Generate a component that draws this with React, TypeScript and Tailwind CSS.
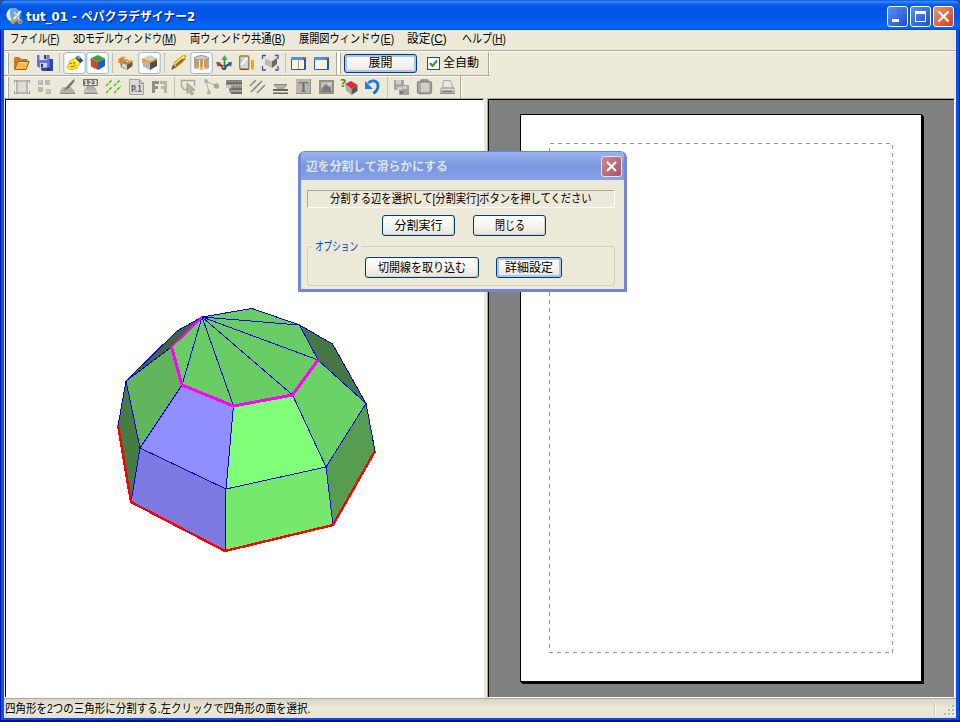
import { useLayoutEffect, useRef } from 'react';
import type { ReactNode } from 'react';

// Single-line text squeezed or stretched horizontally to an exact width.
function Fit({ w, children, className = '' }: { w: number; children: ReactNode; className?: string }) {
  const ref = useRef<HTMLSpanElement>(null);
  useLayoutEffect(() => {
    const el = ref.current;
    if (el && el.offsetWidth) el.style.transform = `scaleX(${w / el.offsetWidth})`;
  }, [w]);
  return (
    <span className={`flex shrink-0 whitespace-nowrap ${className}`} style={{ width: w }}>
      <span ref={ref} className="block shrink-0 origin-left">{children}</span>
    </span>
  );
}

function Tool({ on = false, children }: { on?: boolean; children: ReactNode }) {
  return (
    <div className="h-[22px] w-[23px] shrink-0">
      <svg width="23" height="22" viewBox="0 0 23 22" fill="none">
        {on && <rect x="0.8" y="0.5" width="21.4" height="21" rx="2.5" fill="#fff" stroke="#98b5cf" />}
        {children}
      </svg>
    </div>
  );
}

const Sep = ({ wide = false }: { wide?: boolean }) => (
  <div className={`flex h-[20px] shrink-0 justify-center ${wide ? 'w-[7px]' : 'w-[6px]'}`}>
    <div className="w-px bg-[#c5c2b2]" />
  </div>
);

const Grip = () => <div className="mr-px h-[21px] w-[3px] shrink-0 border-r border-[#aca899] bg-white" />;
const End = () => <div className="ml-[2px] h-[23px] w-[2px] shrink-0 border-l border-[#aca899] bg-white" />;

const Cube = ({ top, left, right }: { top: string; left: string; right: string }) => (
  <>
    <path d="M4.5 6.5 12 3 19 6.5 12 10Z" fill={top} />
    <path d="M4.5 6.5 12 10V18L5 14.5Z" fill={left} />
    <path d="M12 10 19 6.5V14L12 18Z" fill={right} />
  </>
);

const WindowIcon = ({ split = false }: { split?: boolean }) => (
  <>
    <rect x="4" y="5" width="15" height="13" rx="1" fill="#2458b8" />
    <rect x="4" y="5" width="12" height="3" fill="#4a94ea" />
    <rect x="15" y="5" width="3" height="2" fill="#e8552b" />
    <rect x="5" y="8" width="12" height="9" fill="#fcf5dc" />
    {split && <path d="M11.5 8v9" stroke="#a59e8c" />}
  </>
);

function TopTools() {
  return (
    <>
      <Tool>
        <path d="M4 6.5 5 5h4l2 2h6.5v2.5H8L4 18Z" fill="#c77a1e" />
        <path d="M4.5 17.5 8 9.5h11.2l-3.2 8Z" fill="#f6b84d" stroke="#a55c11" />
        <path d="M8.5 10.5h9" stroke="#ffe09a" />
      </Tool>
      <Tool>
        <path d="M8 7h12v12H9.5L8 17.5Z" fill="#3444b4" />
        <path d="M4 3h12.5v12.5H5.5L4 14Z" fill="#6276da" />
        <path d="M6.5 3h7v5h-7Z" fill="#dfe2f8" /><path d="M7 11h7v4.5H7Z" fill="#cfd4e5" />
        <path d="M11 3h2v4h-2ZM8 12h2v3H8ZM14 16h3v3h-3Z" fill="#2b3579" />
      </Tool>
      <Sep wide />
      <Tool on>
        <path d="m12 6 3-2.5 5.5 5-3.5 3Z" fill="#304c78" /><path d="m14 5 2-1.5 2 2-2.5 2Z" fill="#88a7cc" />
        <path d="m4 15.5 3-6.5 5-3 5 5-3.5 5.5-7 1.5Z" fill="#ffe51e" stroke="#d9a800" strokeWidth=".8" />
        <circle cx="8" cy="11.5" r=".8" fill="#665800" /><circle cx="11" cy="11" r=".8" fill="#665800" />
        <path d="M7.5 14.5q3 1 5-1.5" stroke="#8c7600" /><path d="m12 7.5 3.5 3.5" stroke="#fff8a0" strokeWidth="1.5" />
      </Tool>
      <Tool on><Cube top="#39a43c" left="#d7462c" right="#245fb2" /></Tool>
      <Sep />
      <Tool>
        <path d="m4 8 5-3 8 2v5l-6 6-5-3Z" fill="#8e8c86" /><path d="m8 7 3-2 7 2.5-5 3Z" fill="#f2f0ea" />
        <path d="m7 11 5 2v5l-5-3.5Z" fill="#dcd9d0" /><path d="m12 13 5.5-3.5V14L12 18Z" fill="#595854" />
        <path d="M9 5 4 7.5V10l3 1.5V9l4-1.5 2.5 1V11l4-2" stroke="#f08b18" strokeWidth="1.5" />
      </Tool>
      <Tool on>
        <Cube top="#cfcdc9" left="#b9b7b1" right="#4e4d4a" />
        <path d="m4.5 7 7.5 3.5L19 7" stroke="#f09425" strokeWidth="1.5" /><path d="M4.7 7v4" stroke="#f09425" />
      </Tool>
      <Sep />
      <Tool>
        <path d="m5 16 2-6 9-7h3v3l-4 5-7 5Z" fill="#e5a71c" /><path d="m7 12 9-8 2 1-8 8Z" fill="#fff04a" />
        <path d="m4 18 2-5 3 2.5Z" fill="#565a62" /><path d="m9 13 7-6" stroke="#55513c" strokeWidth="1.3" />
        <path d="m8 16 10-9" stroke="#a5571d" />
      </Tool>
      <Tool on>
        <path d="M4 6q7-5 15 0v10q-2 2-3-1H7q-1 3-3 1Z" fill="#a5a6a9" />
        <path d="M4 6q7-5 15 0l-2 2H6Z" fill="#c8cbd0" stroke="#777a80" strokeWidth=".7" />
        <path d="M7.5 7v10M11.5 7v11M15.5 7v10" stroke="#f29127" strokeWidth="2" />
        <path d="M9.5 8v8M13.5 8v8" stroke="#fff" />
      </Tool>
      <Tool>
        <path d="M11.5 14V6" stroke="#278545" strokeWidth="1.6" /><path d="m11.5 3 3 5h-6Z" fill="#41a958" />
        <path d="m11 15-6-3" stroke="#963331" strokeWidth="2.4" /><path d="m3 10 5 .5-3 4.5Z" fill="#b9362d" />
        <path d="m11 15 6-3" stroke="#245a8b" strokeWidth="2.4" /><path d="m19 10-4.5.5L18 15Z" fill="#285b91" />
        <circle cx="11" cy="15.5" r="2.6" fill="#405a5e" /><circle cx="10.5" cy="14.7" r="1" fill="#b7c7c1" />
      </Tool>
      <Tool>
        <rect x="3.7" y="4" width="9" height="13" rx="1" fill="#b7dcf0" stroke="#b77730" strokeWidth="1.4" />
        <path d="m5 13 6-7" stroke="#fff" strokeWidth="2" /><path d="M4 17.5h9" stroke="#835022" />
        <path d="M15 8h3v9.5h-3Z" fill="#f5a21d" />
      </Tool>
      <Tool>
        <path d="M3.5 7V3.5H7M16 3.5h3V7M3.5 14v4H7M16 18h3v-4" stroke="#3552c5" strokeWidth="1.3" />
        <path d="m6 6.5 6-3 6 2.5-5 3.5Z" fill="#e4e4e4" /><path d="m6 6.5 7 3V16l-7-3.5Z" fill="#b9b9b9" /><path d="M13 9.5 18 6v6l-5 4Z" fill="#666" />
      </Tool>
      <Sep />
      <div className="-ml-px flex">
        <Tool><WindowIcon split /></Tool>
        <Tool><WindowIcon /></Tool>
      </div>
      <div className="w-px" />
    </>
  );
}

function BottomTools() {
  return (
    <>
      <Tool>
        <path d="M7 5h10v12H7Z" fill="#dddcd7" stroke="#aaa99f" strokeWidth="1.5" />
        <path d="M4.5 7V4.5H7M17 4.5h2.500V7M4.500 15v2.500H7M17 17.500h2.500V15" stroke="#9a9991" />
      </Tool>
      <Tool><path d="M5 4h5v5H5ZM12 4h5v5h-5ZM5 11h5v5H5ZM13 13h5v5h-5Z" fill="#bbb9b0" /><path d="M6 4h2v2H6ZM14 14h2v2h-2Z" fill="#d0cec5" /></Tool>
      <Tool>
        <path d="m4 15 3-4h8l4 5v2H4Z" fill="#b2b1aa" /><path d="m8 14 4-5 5-5 2-1-1 3-5 6-4 2Z" fill="#74736d" />
        <path d="M4 17.500h15" stroke="#8d8c86" />
      </Tool>
      <Tool>
        <path d="m5 15 3-5h7l3 5v3H5Z" fill="#aeada7" />
        <rect x="4" y="3" width="15" height="7" rx="1" fill="#73726d" />
        <text x="11.5" y="9" textAnchor="middle" fontFamily="DejaVu Sans, sans-serif" fontWeight="700" fontSize="6.5" fill="#fff">123</text>
        <path d="M6 15h12" stroke="#d6d5ce" /><path d="M5 17.500h14" stroke="#8d8c86" />
      </Tool>
      <Tool><path d="m4 10 6-6M4 17 10 11M12 10l6-6M12 17l7-7" stroke="#65c52b" strokeWidth="1.7" strokeDasharray="3.500 1" /></Tool>
      <Tool>
        <path d="M4.500 3.500h10l4 4v11h-14Z" fill="#dcdbd5" stroke="#a3a29c" /><path d="M14.500 3.500v4h4" stroke="#8d8c86" />
        <text x="11.500" y="16" textAnchor="middle" fontFamily="DejaVu Sans, sans-serif" fontWeight="700" fontSize="8.500" textLength="11" lengthAdjust="spacingAndGlyphs" fill="#686761">P.1</text>
      </Tool>
      <Tool>
        <path d="M4 5h7v3H7v2h3v3H7v4H4Z" fill="#908f89" /><path d="M12 5h7v12h-3v-4h-3v-3h3V8h-4Z" fill="#b8b7af" />
      </Tool>
      <Sep />
      <Tool>
        <path d="M10 13.500H7L4.500 10V4.500h13V10" stroke="#a9a8a2" strokeWidth="1.400" />
        <path d="m10 7 8 7-4 .5 2.500 3.500-2 1-2.500-3.500-2 2Z" fill="#b7b6af" stroke="#8f8e88" strokeWidth=".8" />
      </Tool>
      <Tool>
        <path d="m6 5 3 11M6 5l10 5" stroke="#adaca5" />
        <circle cx="6" cy="5" r="2" fill="#b2b1aa" /><circle cx="16.500" cy="10" r="2.700" fill="#a8a7a0" /><circle cx="9" cy="16.500" r="2" fill="#b4b3ac" />
      </Tool>
      <Tool>
        <path d="M3 4h16v14H8l-2-3V9H3Z" fill="#92918b" />
        <path d="M4 4.500h14" stroke="#73726d" strokeDasharray="2 1" />
        <path d="M3 7h16M8 13h11M8 17h11" stroke="#63625d" strokeWidth="1.500" />
        <path d="M8 9.500h10M8 15h10" stroke="#bcbbb4" strokeDasharray="2 1" /><path d="M3 9h5v3H3Z" fill="#c9c8c0" />
      </Tool>
      <Tool><path d="m4 10 6-6M5 16 16 5M11 17l8-8" stroke="#8d8c84" strokeWidth="1.700" /></Tool>
      <Tool>
        <path d="M5 8h13v2q-3 2-3 4H8q0-2-3-4Z" fill="#aeada6" /><path d="M5 8.500h13" stroke="#85847e" />
        <path d="M4 13h15v2H4ZM4 16.500h15v1.500H4Z" fill="#66655f" />
      </Tool>
      <Tool>
        <path d="M4 3h15v15H4Z" fill="#b7b6af" /><path d="M4 17.500h15M18.500 3v15" stroke="#92918b" />
        <text x="11.500" y="15.500" textAnchor="middle" fontFamily="Liberation Serif, serif" fontWeight="700" fontSize="14" fill="#75746f">T</text>
      </Tool>
      <Tool>
        <path d="M4 4h15v14H4Z" fill="#92918b" /><path d="M6 6h11v10H6Z" fill="#c0bfb8" /><path d="m6 16 1-4 4-4 3 3 1-1 2 6Z" fill="#7d7c77" /><circle cx="14.500" cy="8" r="1.200" fill="#deddd6" />
      </Tool>
      <Tool>
        <path d="m7 8 6-3 6.500 4-6 4Z" fill="#dc2b35" /><path d="m7 8 6.500 5v6L8 14.500Z" fill="#aaa" /><path d="m13.500 13 6-4v6l-6 4Z" fill="#56575d" />
        <text x="2" y="10.500" fontFamily="DejaVu Sans, sans-serif" fontWeight="700" fontSize="11" fill="#468c15">?</text>
      </Tool>
      <Tool>
        <path d="M7 7C12 3 17 5 17 10q0 4-4.500 7.500" stroke="#156fc5" strokeWidth="2.800" /><path d="M7 6.500C12 3 16 6 16.500 10" stroke="#38a4ee" />
        <path d="M4 5v8h8Z" fill="#1c80d8" />
      </Tool>
      <Sep />
      <Tool>
        <path d="M9 9h10v10H9Z" fill="#a2a19b" /><path d="M4 4h10v10H4Z" fill="#a8a7a1" /><path d="M6 4h5v4H6ZM7 11h5v3H7ZM13 10h4v3h-4Z" fill="#d0cfc8" /><path d="M10 15h3v3h-3Z" fill="#7d7c77" />
      </Tool>
      <Tool>
        <rect x="4.500" y="5.500" width="14" height="12" rx="2" fill="#a9a8a1" stroke="#8d8c86" strokeWidth="1.300" /><path d="M8.500 6V4h6v2" stroke="#85847e" strokeWidth="1.500" />
        <path d="M8 7h8v9H8Z" fill="#cfcec7" />
      </Tool>
      <Tool>
        <path d="M7.500 4.500h7l2.500 7H6.500Z" fill="#e8e7e1" stroke="#a9a8a1" /><path d="m4 13 2-2h12l1 2v5H4Z" fill="#b2b1aa" /><path d="M5 13.500h13" stroke="#dddcd6" /><path d="M7 15.500h9" stroke="#73726d" /><path d="M4 17.500h15" stroke="#8d8c86" />
      </Tool>
    </>
  );
}

const MENUS: [string, string, number, number][] = [
  ['ファイル', 'F', 49, 14],
  ['3Dモデルウィンドウ', 'M', 103, 14],
  ['両ウィンドウ共通', 'B', 95, 14],
  ['展開図ウィンドウ', 'E', 95, 13],
  ['設定', 'C', 40, 15],
  ['ヘルプ', 'H', 44, 0],
];

const EDGES =
  'M202 317 252 308.5 299.5 325 332.5 344 366 403.5 375 451M202 317 177 331 126 381 171.5 347M126 381 118 426M126 381 140 448 131 502M140 448 182 385 202 317M140 448 226 489 233.5 406 202 317 292.5 395 326 467 366 403.5 318 360 299.5 325 202 317 318 360M226 489 326 467 333 525M226 489 225 551';

function Dome() {
  return (
    <svg className="ml-[94px] mt-[200px] shrink-0" width="290" height="260" viewBox="100 300 290 260" fill="none" shapeRendering="crispEdges">
      <path d="M202 317 252 308 300 325 318 360 292 395 233 406 182 385 171 347Z" fill="#6acc65" />
      <path d="M202 317 171 347 126 381 177 331Z" fill="#40663e" />
      <path d="M171 347 182 385 140 448 126 381Z" fill="#62b55d" />
      <path d="M126 381 140 448 131 502 118 426Z" fill="#477b44" />
      <path d="M182 385 233 406 226 489 140 448Z" fill="#918fff" />
      <path d="M140 448 226 489 225 551 131 502Z" fill="#7e7ae2" />
      <path d="M233 406 292 395 326 467 226 489Z" fill="#82ff79" />
      <path d="M226 489 326 467 333 525 225 551Z" fill="#75e86d" />
      <path d="M292 395 318 360 366 403 326 467Z" fill="#6bd265" />
      <path d="M326 467 366 403 375 451 333 525Z" fill="#569d51" />
      <path d="M300 325 332 344 366 403 318 360Z" fill="#467643" />
      <path d={EDGES} stroke="#0000f4" />
      <path d="M202 317 171.5 347" stroke="#f0f" strokeWidth="2" />
      <path d="m171.5 347 10.5 38 51.5 21 59-11L318 360" stroke="#f0f" strokeWidth="3" />
      <path d="M118 425 131 502 225 551 333 525 375 451" stroke="#f00" strokeWidth="2.4" />
    </svg>
  );
}

function XpButton({ w, tw, focus = false, children }: { w: string; tw: number; focus?: boolean; children: ReactNode }) {
  return (
    <button
      className={`flex h-[21px] items-center justify-center rounded-[3px] border border-[#003c74] bg-linear-to-b from-white via-[#f5f4ef] to-[#e6e3da] text-[12px] leading-none ${w} ${focus ? 'shadow-[inset_0_0_0_2px_#a9c5f3]' : 'shadow-[inset_-1px_-1px_0_#d6d0c5]'}`}
    >
      <Fit w={tw}>{children}</Fit>
    </button>
  );
}

function Dialog() {
  return (
    <div className="absolute left-[298px] top-[151px] flex h-[141px] w-[329px] flex-col overflow-hidden rounded-t-[7px] border-x-[3px] border-b-[3px] border-[#7385d8] bg-[#ece9d8]">
      <div className="-mx-[3px] flex h-[29px] shrink-0 items-center justify-between border-t border-[#6886d5] bg-linear-to-b from-[#98b4ee] via-[#7a96df] to-[#84a3e8] pl-[8px] pr-[5px]">
        <Fit w={142} className="mt-[2px] text-[12px] font-bold leading-none text-[#dce5fa]">辺を分割して滑らかにする</Fit>
        <div className="flex size-[21px] items-center justify-center rounded-[3px] border border-[#dfe5f7] bg-linear-to-br from-[#cf8793] to-[#ae5364]">
          <svg width="13" height="13" viewBox="0 0 13 13"><path d="m2 2 9 9m0-9-9 9" stroke="#fff" strokeWidth="2.2" /></svg>
        </div>
      </div>
      <div className="flex flex-col px-[6px] pt-[10px]">
        <div className="flex h-[18px] w-[308px] items-center justify-center border border-b-white border-l-[#aca899] border-r-white border-t-[#aca899] text-[12px] leading-none">
          <Fit w={262}>分割する辺を選択して[分割実行]ボタンを押してください</Fit>
        </div>
        <div className="mt-[7px] flex gap-[18px] pl-[75px]">
          <XpButton w="w-[73px]" tw={48}>分割実行</XpButton>
          <XpButton w="w-[73px]" tw={30}>閉じる</XpButton>
        </div>
        <div className="mt-[4px] flex h-[12px] w-[308px] items-center text-[12px] leading-none text-[#0046d5]">
          <div className="mt-[6px] h-[6px] w-[5px] rounded-tl-[4px] border-l border-t border-[#d0d0bf]" />
          <Fit w={43} className="mx-[3px] mt-[2px]">オプション</Fit>
          <div className="mt-[6px] h-[6px] grow rounded-tr-[4px] border-r border-t border-[#d0d0bf]" />
        </div>
        <div className="flex h-[34px] w-[308px] gap-[17px] rounded-b-[4px] border-x border-b border-[#d0d0bf] pl-[57px] pt-[5px]">
          <XpButton w="w-[114px]" tw={88}>切開線を取り込む</XpButton>
          <XpButton w="w-[66px]" tw={48} focus>詳細設定</XpButton>
        </div>
      </div>
    </div>
  );
}

function TitleBar() {
  return (
    <div className="flex h-[30px] shrink-0 items-center rounded-t-[7px] bg-[linear-gradient(#0857dc_0,#3b8cf7_6%,#0a62ee_13%,#0054e3_28%,#0057e6_60%,#0068ff_88%,#0063f6_95%,#003dc6_100%)] pl-[6px] pr-[6px]">
      <svg className="mt-[2px]" width="17" height="18" viewBox="0 0 17 18" fill="none">
        <circle cx="7.5" cy="8" r="7.2" fill="#6fa5d6" /><path d="M5 1Q-2 6 2 12q2 3 5 3Q2 9 5 1Z" fill="#e7f3fb" />
        <path d="m8 5 6 9m1-10-8 9" stroke="#f1f5f8" strokeWidth="2" /><path d="m8 5 5 8" stroke="#667f94" strokeWidth=".7" />
        <circle cx="7" cy="14.5" r="1.8" stroke="#d19b1d" strokeWidth="1.4" /><circle cx="14" cy="14.5" r="1.8" stroke="#d19b1d" strokeWidth="1.4" />
      </svg>
      <Fit w={169} className="ml-[3px] mt-[4px] grow font-['DejaVu_Sans','Noto_Sans_CJK_JP',sans-serif] text-[12px] font-bold leading-none text-white [text-shadow:1px_1px_0_#0a1883]">
        tut_01 - ペパクラデザイナー2
      </Fit>
      <div className="ml-auto mt-[3px] flex gap-[2px]">
        <div className="flex size-[21px] rounded-[3px] border border-white bg-linear-to-br from-[#5b8ef3] to-[#1e4fd0]">
          <div className="ml-[4px] mt-[12px] h-[3px] w-[7px] bg-white" />
        </div>
        <div className="flex size-[21px] rounded-[3px] border border-white bg-linear-to-br from-[#5b8ef3] to-[#1e4fd0]">
          <div className="ml-[4px] mt-[4px] h-[11px] w-[11px] border border-t-[3px] border-white" />
        </div>
        <div className="flex size-[21px] items-center justify-center rounded-[3px] border border-white bg-linear-to-br from-[#ee9275] to-[#cf3c16]">
          <svg width="13" height="13" viewBox="0 0 13 13"><path d="m1.5 1.5 10 10m0-10-10 10" stroke="#fff" strokeWidth="2.2" /></svg>
        </div>
      </div>
    </div>
  );
}

export default function App() {
  return (
    <div className="relative flex h-[722px] w-[960px] flex-col overflow-hidden bg-[#1a4f8c] font-['Liberation_Sans','Noto_Sans_CJK_JP',sans-serif] text-black">
      <TitleBar />
      <div className="flex h-[692px] flex-col border-x border-b-2 border-x-[#0019a8] border-b-[#00138c]">
      <div className="flex h-[690px] flex-col border-x-[3px] border-b-2 border-x-[#0a50ea] border-b-[#0a4be4] bg-[#ece9d8] shadow-[inset_1px_0_#f4f2e8]">
        <div className="flex h-[20px] shrink-0 items-center pb-[2px] pl-[6px] text-[12px] leading-none">
          {MENUS.map(([label, key, w, gap]) => (
            <div key={key} className="flex" style={{ marginRight: gap }}>
              <Fit w={w}>{label}(<span className="underline underline-offset-1">{key}</span>)</Fit>
            </div>
          ))}
        </div>
        <div className="flex h-[25px] shrink-0 items-center border-t border-[#aca899] pl-[2px] shadow-[inset_0_1px_white]">
          <Grip />
          <TopTools />
          <End />
          <Grip />
          <div className="ml-[2px] flex h-[19px] w-[73px] items-center justify-center rounded-[3px] border border-[#003c74] bg-linear-to-b from-white to-[#ebe8df] text-[12px] leading-none shadow-[inset_0_0_0_2px_#a9c5f3]">
            <Fit w={24}>展開</Fit>
          </div>
          <div className="ml-[10px] flex size-[13px] items-center justify-center border border-[#1c5180] bg-white">
            <svg width="9" height="9" viewBox="0 0 9 9"><path d="m1 4 2.5 3L8 1.5" fill="none" stroke="#21a121" strokeWidth="2" /></svg>
          </div>
          <Fit w={36} className="ml-[3px] text-[12px] leading-none">全自動</Fit>
          <div className="ml-[7px]"><End /></div>
        </div>
        <div className="flex h-[23px] w-full shrink-0 items-center">
          <div className="flex h-[24px] w-[486px] items-center border-t border-[#aca899] pl-[2px] shadow-[inset_0_1px_white]">
            <Grip />
            <BottomTools />
            <div className="-ml-px"><End /></div>
          </div>
        </div>
        <div className="flex h-[600px] shrink-0">
          <div className="flex w-[480px] border-b border-t border-b-white border-t-[#aca899] pl-px">
            <div className="flex w-[478px] border-l border-t border-black bg-white">
              <Dome />
            </div>
            <div className="w-px border-l border-white" />
          </div>
          <div className="ml-[3px] w-[468px] border border-b-white border-l-[#aca899] border-r-white border-t-[#aca899]">
            <div className="h-full border-l border-t border-black bg-[#808080] pl-[31px] pt-[14px]">
              <div className="h-[568px] w-[402px] border border-black bg-white pl-[28px] pt-[28px] shadow-[1px_1px_0_#000,2px_2px_0_#000]">
                <svg width="345" height="511" viewBox="0 0 345 511" fill="none" shapeRendering="crispEdges">
                  <path d="M.5.5h343v509H.5Z" stroke="#999" strokeDasharray="4 4" />
                </svg>
              </div>
            </div>
          </div>
        </div>
        <div className="flex h-[20px] shrink-0 items-center border-t border-[#aca899] bg-linear-to-b from-[#d9d6c6] via-[#ece9d8] to-[#e6e2cf] pl-px">
          <Fit w={305} className="text-[12px] leading-none">四角形を2つの三角形に分割する.左クリックで四角形の面を選択.</Fit>
          <div className="ml-auto mr-[8px] mt-[2px] h-[13px] w-[2px] border-l border-[#c8c5b4] bg-white" />
          <svg width="12" height="12" viewBox="0 0 12 12" className="mt-[4px]">
            <path d="M9 1h2v2H9ZM5 5h2v2H5ZM9 5h2v2H9ZM1 9h2v2H1ZM5 9h2v2H5ZM9 9h2v2H9Z" fill="#fff" />
            <path d="M8 0h2v2H8ZM4 4h2v2H4ZM8 4h2v2H8ZM0 8h2v2H0ZM4 8h2v2H4ZM8 8h2v2H8Z" fill="#b8b4a3" />
          </svg>
        </div>
      </div>
      </div>
      <Dialog />
    </div>
  );
}
